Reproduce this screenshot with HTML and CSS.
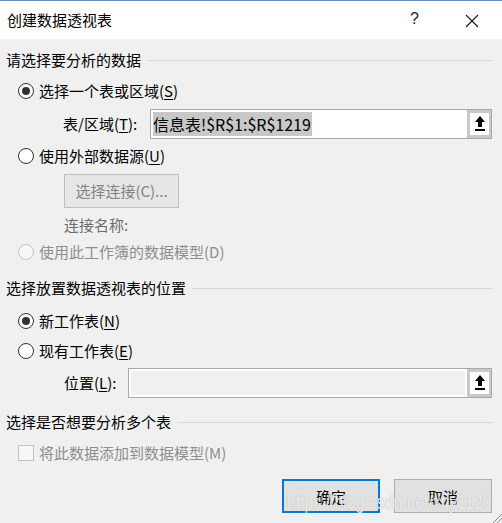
FILE: index.html
```html
<!DOCTYPE html>
<html lang="zh-CN">
<head>
<meta charset="utf-8">
<title>创建数据透视表</title>
<link rel="stylesheet" href="styles.css">
</head>
<body>
<div class="dialog">
  <div class="titlebar">
    <span class="title">创建数据透视表</span>
    <span class="help">?</span>
    <span class="close">
      <svg width="14" height="14" viewBox="0 0 14 14"><path d="M1 1L13 13M13 1L1 13" stroke="#1a1a1a" stroke-width="1.1" fill="none"/></svg>
    </span>
  </div>
  <div class="content">
    <div class="group g1"><span class="group-label">请选择要分析的数据</span><span class="rule"></span></div>
    <div class="row r-radio1"><span class="radio checked"></span><span class="lbl">选择一个表或区域(<u>S</u>)</span></div>
    <div class="row r-input1">
      <span class="field-label">表/区域(<u>T</u>):</span>
      <div class="refbox">
        <div class="reffield"><span class="sel">信息表!$R$1:$R$1219</span></div>
        <div class="refbtn">
          <svg width="12" height="18" viewBox="0 0 12 18"><path d="M6 1L11 7H8V12H4V7H1Z" fill="#000"/><rect x="1" y="14" width="10" height="2" fill="#000"/></svg>
        </div>
      </div>
    </div>
    <div class="row r-radio2"><span class="radio"></span><span class="lbl">使用外部数据源(<u>U</u>)</span></div>
    <div class="row r-conn"><span class="btn disabled">选择连接(C)...</span></div>
    <div class="row r-connname"><span class="muted">连接名称:</span></div>
    <div class="row r-radio3"><span class="radio disabled"></span><span class="lbl dim">使用此工作簿的数据模型(D)</span></div>
    <div class="group g2"><span class="group-label">选择放置数据透视表的位置</span><span class="rule"></span></div>
    <div class="row r-radio4"><span class="radio checked"></span><span class="lbl">新工作表(<u>N</u>)</span></div>
    <div class="row r-radio5"><span class="radio"></span><span class="lbl">现有工作表(<u>E</u>)</span></div>
    <div class="row r-input2">
      <span class="field-label short">位置(<u>L</u>):</span>
      <div class="refbox">
        <div class="reffield disabledfield"></div>
        <div class="refbtn">
          <svg width="12" height="18" viewBox="0 0 12 18"><path d="M6 1L11 7H8V12H4V7H1Z" fill="#000"/><rect x="1" y="14" width="10" height="2" fill="#000"/></svg>
        </div>
      </div>
    </div>
    <div class="group g3"><span class="group-label">选择是否想要分析多个表</span><span class="rule"></span></div>
    <div class="row r-check"><span class="checkbox"></span><span class="lbl dim">将此数据添加到数据模型(M)</span></div>
    <div class="footer">
      <span class="btn primary">确定</span>
      <span class="btn">取消</span>
    </div>
  </div>
  <div class="watermark">https://blog.csdn.net/xuy1120</div>
  <svg class="grip" width="10" height="10" viewBox="0 0 10 10"><path d="M10 1L1 10M10 5L5 10" stroke="#8a8a8a" stroke-width="1"/></svg>
</div>
</body>
</html>
```
FILE: styles.css
```css
html, body {
  margin: 0;
  padding: 0;
  background: #f0f0f0;
}
body {
  font-family: "Noto Sans CJK SC", "Microsoft YaHei", "Noto Sans", sans-serif;
  font-size: 15px;
  color: #1a1a1a;
}
.dialog {
  position: relative;
  width: 502px;
  height: 523px;
  background: #f0f0f0;
  overflow: hidden;
}
.titlebar {
  height: 38px;
  background: #fff;
  border-top: 1px solid #6a8fbf;
  display: flex;
  align-items: center;
  position: relative;
}
.title {
  margin-left: 7px;
  color: #000;
  line-height: 20px;
}
.help {
  position: absolute;
  left: 410px;
  top: 9px;
  font-family: "Liberation Sans", sans-serif;
  font-size: 16px;
  color: #1a1a1a;
}
.close {
  position: absolute;
  left: 465px;
  top: 13px;
  line-height: 0;
}
.content {
  display: flex;
  flex-direction: column;
}
.group {
  display: flex;
  align-items: center;
  height: 20px;
  line-height: 20px;
  padding-left: 6px;
  padding-right: 9px;
  color: #000;
}
.group .rule {
  flex: 1;
  height: 1px;
  background: #d9d9d9;
  margin-left: 6px;
  margin-top: 1px;
}
.g1 { margin-top: 11px; }
.g2 { margin-top: 16px; }
.g3 { margin-top: 14px; }
.row {
  display: flex;
  align-items: center;
  height: 20px;
  line-height: 20px;
  padding-left: 18px;
}
.lbl { margin-left: 5px; color: #000; }
.lbl.dim { color: #8e8e8e; }
u { text-decoration-thickness: 1px; text-underline-offset: 2px; }
.radio {
  width: 14px;
  height: 14px;
  border: 1px solid #333;
  border-radius: 50%;
  background: #fff;
  position: relative;
  flex: none;
}
.radio.checked::after {
  content: "";
  position: absolute;
  left: 3px;
  top: 3px;
  width: 8px;
  height: 8px;
  border-radius: 50%;
  background: #333;
}
.radio.disabled { border-color: #c2c2c2; background: #f7f7f7; }
.checkbox {
  width: 14px;
  height: 14px;
  border: 1px solid #c2c2c2;
  background: #f7f7f7;
  flex: none;
}
.r-radio1 { margin-top: 11px; }
.r-input1 { margin-top: 8px; height: 30px; padding-left: 63px; padding-right: 10px; }
.r-radio2 { margin-top: 7px; }
.r-conn { margin-top: 8px; height: 34px; padding-left: 64px; }
.r-connname { margin-top: 7px; padding-left: 64px; }
.r-radio3 { margin-top: 7px; }
.r-radio4 { margin-top: 13px; }
.r-radio5 { margin-top: 10px; }
.r-input2 { margin-top: 7px; height: 30px; padding-left: 64px; padding-right: 10px; }
.r-check { margin-top: 11px; }
.field-label { width: 87px; flex: none; color: #000; }
.field-label.short { width: 64px; }
.refbox {
  flex: 1;
  height: 30px;
  box-sizing: border-box;
  border: 1px solid #a9a9a9;
  display: flex;
  background: #fff;
}
.reffield {
  flex: 1;
  display: flex;
  align-items: center;
  padding-left: 2px;
  font-family: "Noto Sans CJK SC", "Liberation Sans", sans-serif;
  font-size: 16px;
}
.reffield .sel {
  background: #c8c8c8;
  color: #000;
  line-height: 24px;
  height: 24px;
  padding-right: 1px;
}
.reffield.disabledfield {
  background: #f0f0f0;
  box-shadow: inset 0 0 0 2px #fff;
}
.refbtn {
  width: 19px;
  flex: none;
  border: 3px solid #c9c9c9;
  border-right-width: 2px;
  background: #fff;
  display: flex;
  align-items: center;
  justify-content: center;
}
.muted { color: #6d6d6d; }
.btn {
  display: inline-flex;
  align-items: center;
  justify-content: center;
  box-sizing: border-box;
  height: 34px;
  width: 98px;
  background: #e1e1e1;
  border: 1px solid #adadad;
  color: #000;
}
.btn.disabled {
  width: 115px;
  color: #838383;
  background: #e6e6e6;
  border-color: #bfbfbf;
}
.footer {
  display: flex;
  justify-content: flex-end;
  gap: 14px;
  padding-right: 10px;
  margin-top: 16px;
}
.btn.primary { border: 2px solid #0078d7; }
.watermark {
  position: absolute;
  left: 287px;
  top: 492px;
  font-family: "Liberation Sans", sans-serif;
  font-size: 20px;
  line-height: 20px;
  white-space: nowrap;
  transform: scaleX(0.79);
  transform-origin: left top;
  color: rgba(255,255,255,0.8);
  text-shadow: 0 0 1px rgba(110,110,110,0.55);
  pointer-events: none;
}
.grip {
  position: absolute;
  right: 0;
  bottom: 0;
}
```
